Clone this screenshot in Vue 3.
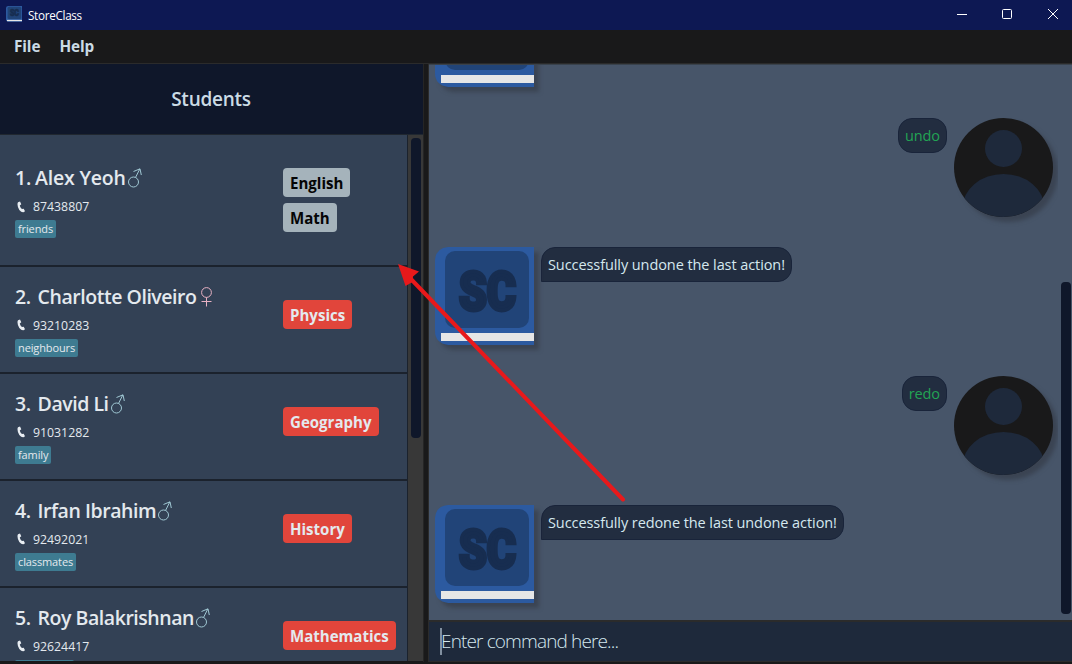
<script setup>
const students = [
  { id: 1, name: 'Alex Yeoh', male: true, phone: '87438807', tag: 'friends', subjects: ['English', 'Math'], plain: true },
  { id: 2, name: 'Charlotte Oliveiro', male: false, phone: '93210283', tag: 'neighbours', subjects: ['Physics'] },
  { id: 3, name: 'David Li', male: true, phone: '91031282', tag: 'family', subjects: ['Geography'] },
  { id: 4, name: 'Irfan Ibrahim', male: true, phone: '92492021', tag: 'classmates', subjects: ['History'] },
  { id: 5, name: 'Roy Balakrishnan', male: true, phone: '92624417', tag: 'colleagues', subjects: ['Mathematics'] },
]
const messages = [
  { bot: true, text: '' },
  { bot: false, text: 'undo' },
  { bot: true, text: 'Successfully undone the last action!' },
  { bot: false, text: 'redo' },
  { bot: true, text: 'Successfully redone the last undone action!' },
]
</script>

<template>
  <div class="window">
    <svg width="0" height="0" class="defs">
      <symbol id="book" viewBox="0 0 99 99">
        <path d="M13 0H99V98H13Q0 96 0 84V13Q1 1 13 0Z" fill="#2c5aa0" />
        <rect x="10" y="4" width="84" height="77" rx="10" fill="#214478" />
        <rect x="6" y="86" width="93" height="8" fill="#e6e6e6" />
        <text x="24" y="62.500" textLength="57" lengthAdjust="spacingAndGlyphs" class="mono">SC</text>
      </symbol>
    </svg>

    <header class="titlebar">
      <svg class="app-icon" width="16" height="16"><use href="#book" /></svg>
      <span class="app-name">StoreClass</span>
      <svg class="controls" width="102" height="12" viewBox="0 0 102 12" fill="none" stroke="#fff">
        <path d="M1 6.500H11" />
        <rect x="46.500" y="1.500" width="9" height="9" rx="1" />
        <path d="M92 1L102 11M102 1L92 11" />
      </svg>
    </header>

    <nav class="menu"><span>File</span><span>Help</span></nav>

    <main class="body">
      <section class="left">
        <h1>Students</h1>
        <div class="list-wrap">
          <div class="list">
            <article v-for="s in students" :key="s.id" class="row" :class="{ tall: s.subjects.length > 1 }">
              <div class="info">
                <div class="name">
                  <span>{{ s.id }}.</span><span class="full">{{ s.name }}</span>
                  <svg v-if="s.male" class="sex" width="14" height="20" viewBox="0 0 14 20" fill="none" stroke="#a0c8d4">
                    <circle cx="5.500" cy="14" r="5" /><path d="M7.500 9.500L11.800 1M5.500 3.500L12 .8L13.300 7" />
                  </svg>
                  <svg v-else class="sex female" width="14" height="20" viewBox="0 0 14 20" fill="none" stroke="#e9b2c4">
                    <circle cx="6.500" cy="5.500" r="4.900" /><path d="M6.500 10.400V19.500M1.500 14.500H11.500" />
                  </svg>
                </div>
                <div class="phone">
                  <svg width="9" height="12" viewBox="0 0 9 12"><path d="M1 1.200L3 .4L4.300 3.200L2.800 4.500Q3.200 6.700 4.900 8L6.700 7.700L8 10.300L6.500 11.300Q4.500 11.700 2.300 9Q.6 6.500.5 3.500Q.4 2 1 1.200Z" fill="#e8edf2" /></svg>
                  <span>{{ s.phone }}</span>
                </div>
                <span class="tag">{{ s.tag }}</span>
              </div>
              <div class="subjects">
                <span v-for="x in s.subjects" :key="x" class="subject" :class="{ plain: s.plain }">{{ x }}</span>
              </div>
            </article>
          </div>
          <div class="track"><div class="thumb"></div></div>
        </div>
      </section>

      <section class="right">
        <div class="chat">
          <div class="messages">
            <div v-for="(m, i) in messages" :key="i" class="message" :class="m.bot ? 'bot' : 'user'">
              <svg v-if="m.bot" class="avatar" width="99" height="99"><use href="#book" /></svg>
              <div v-if="m.text" class="bubble">{{ m.text }}</div>
              <svg v-if="!m.bot" class="avatar" width="99" height="99" viewBox="0 0 99 99">
                <clipPath id="round"><circle cx="49.500" cy="49.500" r="49.500" /></clipPath>
                <g clip-path="url(#round)">
                  <rect width="99" height="99" fill="#19191a" />
                  <circle cx="49.500" cy="30.500" r="18.500" fill="#1e293b" />
                  <ellipse cx="49.500" cy="90" rx="41" ry="34" fill="#1e293b" />
                </g>
              </svg>
            </div>
          </div>
          <div class="chat-thumb"></div>
        </div>
        <div class="command"><i class="caret"></i><span>Enter command here...</span></div>
      </section>
    </main>

    <svg class="arrow" width="1072" height="664" viewBox="0 0 1072 664">
      <path d="M623 499.500L409 277" stroke="#e8191b" stroke-width="4" stroke-linecap="round" />
      <path d="M398 264L419 271.500L413 276.500L412.500 282L405.500 286Z" fill="#e8191b" />
    </svg>
  </div>
</template>

<style>
body { overflow: hidden; background: #191919; }
</style>

<style scoped>
* { box-sizing: border-box; }
.window { position: relative; width: 1072px; height: 664px; display: flex; flex-direction: column; overflow: hidden; background: #19191a; color: #e4e9ee; font-family: "Open Sans", "Noto Sans", sans-serif; white-space: nowrap; }
.defs { position: absolute; }
.mono { font-family: Roboto, sans-serif; font-weight: 900; font-size: 53px; fill: #172d50; stroke: #172d50; stroke-width: 4px; }
.titlebar { flex: none; height: 30px; display: flex; align-items: center; padding: 0 14px 2px 6px; background: #0d1853; }
.app-name { margin-left: 6px; padding-top: 1px; font-size: 11.7px; letter-spacing: -.3px; color: #fff; }
.controls { margin-left: auto; }
.menu { flex: none; height: 34px; display: flex; align-items: center; gap: 19px; padding: 0 0 1px 14px; border-bottom: 1px solid #2b2b2b; font-size: 15.3px; font-weight: 700; color: #cbdbe5; letter-spacing: -.1px; }
.body { flex: none; height: 598px; display: grid; grid-template-columns: 424px 644px; gap: 4px; }
.left { display: flex; flex-direction: column; min-height: 0; border-right: 1px solid #252525; }
h1 { flex: none; margin: 0; height: 71px; line-height: 71px; padding-right: 1px; text-align: center; font-size: 19px; font-weight: 600; letter-spacing: -.25px; color: #cbdbe5; background: #0f172a; border-bottom: 1px solid #202730; }
.list-wrap { flex: none; height: 526px; display: flex; }
.list { width: 408px; overflow: hidden; border-right: 1px solid #1b222d; }
.row { height: 107px; display: grid; grid-template-columns: 268px 1fr; padding-left: 15px; background: #334155; border-bottom: 2px solid #1b222d; }
.row.tall { height: 132px; }
.info { align-self: center; height: 75px; display: flex; flex-direction: column; align-items: flex-start; }
.name { display: flex; height: 30px; line-height: 29px; font-size: 19.500px; font-weight: 600; letter-spacing: -.46px; }
.tall .name { height: 31px; letter-spacing: -.2px; }
.full { margin-left: 7px; }
.tall .full { margin-left: 4px; }
.sex { margin: 5px 0 0 2px; }
.sex.female { margin-left: 4px; }
.phone { display: flex; align-items: center; height: 26px; padding-left: 2px; font-size: 12.300px; }
.phone span { margin-left: 7px; }
.tag { height: 18px; line-height: 18px; margin-top: 1px; padding: 0 3px; border-radius: 2px; background: #3e7b91; font-size: 11px; letter-spacing: -.12px; }
.tall .tag { margin-top: 0; }
.subjects { display: flex; flex-direction: column; align-items: flex-start; gap: 6px; padding-top: 33px; }
.subject { height: 29px; line-height: 30px; padding: 0 7px; border-radius: 4px; background: #e1453b; font-size: 15.05px; font-weight: 700; }
.subject.plain { background: #a5b3bb; color: #050505; }
.track { width: 15px; padding: 3px 2px 0 3px; background: #383838; }
.thumb { height: 300px; border-radius: 4px; background: #0f172a; }
.right { display: flex; flex-direction: column; border-left: 1px solid #2b2b2b; }
.chat { flex: none; height: 556px; display: flex; justify-content: space-between; overflow: hidden; background: #475569; border-top: 1px solid #39424c; }
.messages { width: 629px; margin-top: -76px; padding: 0 5px 0 6px; overflow: hidden; }
.message { height: 129px; display: flex; align-items: flex-start; }
.user { justify-content: flex-end; gap: 7px; color: #22a454; }
.bot { gap: 7px; color: #d5e8ef; }
.avatar { flex: none; overflow: visible; filter: drop-shadow(5px 5px 2px rgba(45, 50, 60, .5)); }
.bubble { height: 35px; line-height: 33px; padding: 0 6px; border: 1px solid #19243a; border-radius: 14px; background: #222d40; font-size: 14.500px; letter-spacing: -.08px; }
.bot .bubble { border-bottom-left-radius: 0; }
.chat-thumb { width: 10px; height: 332px; margin: 217px 1px 0 0; border-radius: 4px; background: #0f172a; }
.command { flex: none; height: 42px; display: flex; align-items: center; padding: 0 0 1px 11px; border-top: 2px solid #2b2b2b; border-bottom: 1px solid #2b2b2b; background: #1e293b; color: #d5e8ef; font-size: 19px; font-weight: 300; letter-spacing: -.86px; }
.caret { width: 2px; height: 27px; margin-right: -1px; background: #8290a0; }
.arrow { position: absolute; inset: 0; pointer-events: none; }
</style>
